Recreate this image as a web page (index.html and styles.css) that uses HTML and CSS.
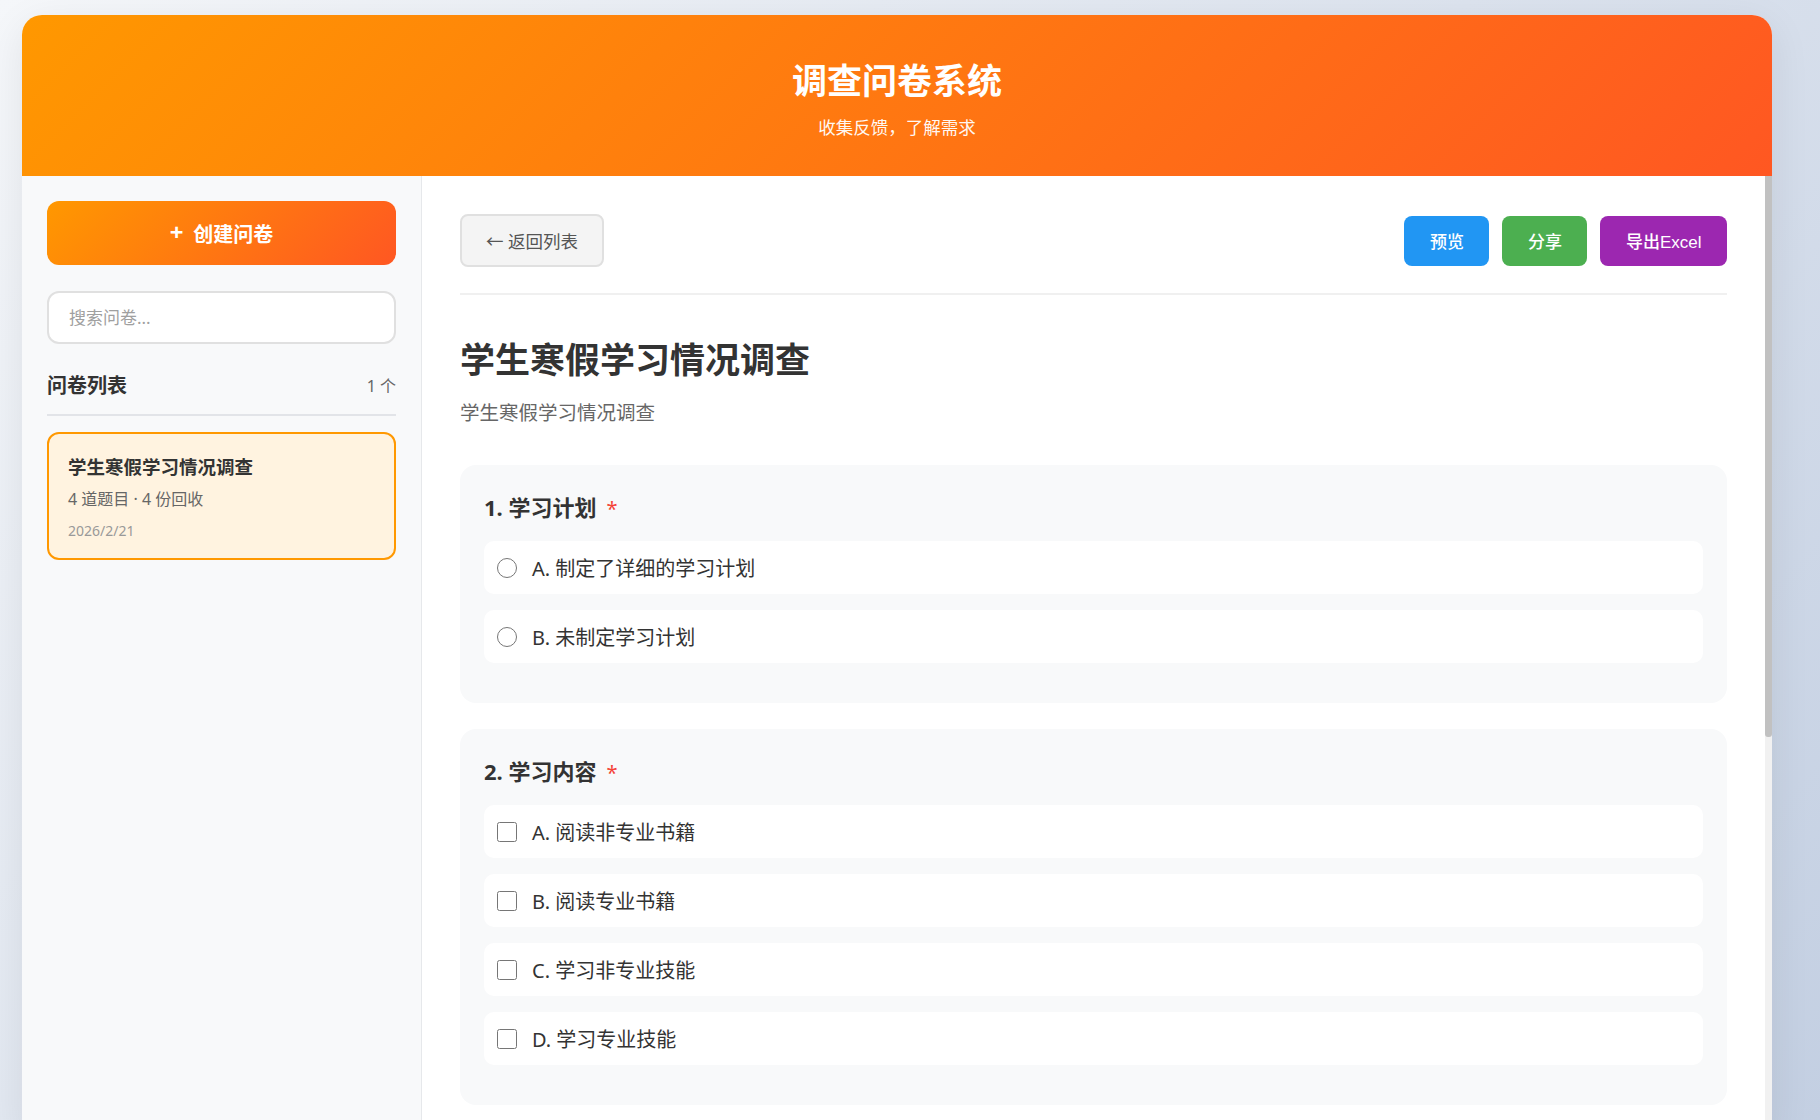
FILE: index.html
```html
<!DOCTYPE html>
<html lang="zh-CN">
<head>
<meta charset="UTF-8">
<title>调查问卷系统</title>
<link rel="stylesheet" href="styles.css">
</head>
<body>
<div class="app">
  <header class="app-header">
    <h1 class="app-title">调查问卷系统</h1>
    <p class="app-subtitle">收集反馈，了解需求</p>
  </header>
  <div class="app-body">
    <aside class="sidebar">
      <button class="create-btn"><span class="plus">+</span>创建问卷</button>
      <input class="search" type="text" placeholder="搜索问卷...">
      <div class="list-head">
        <span class="list-title">问卷列表</span>
        <span class="list-count">1 个</span>
      </div>
      <div class="survey-card">
        <div class="survey-name">学生寒假学习情况调查</div>
        <div class="survey-meta">4 道题目 · 4 份回收</div>
        <div class="survey-date">2026/2/21</div>
      </div>
    </aside>
    <main class="main">
      <div class="toolbar">
        <button class="back-btn">← 返回列表</button>
        <div class="actions">
          <button class="act act-blue">预览</button>
          <button class="act act-green">分享</button>
          <button class="act act-purple">导出Excel</button>
        </div>
      </div>
      <h2 class="survey-title">学生寒假学习情况调查</h2>
      <p class="survey-desc">学生寒假学习情况调查</p>

      <section class="question">
        <div class="q-title">1. 学习计划<span class="req">*</span></div>
        <label class="option"><input type="radio" name="q1"><span>A. 制定了详细的学习计划</span></label>
        <label class="option"><input type="radio" name="q1"><span>B. 未制定学习计划</span></label>
      </section>

      <section class="question">
        <div class="q-title">2. 学习内容<span class="req">*</span></div>
        <label class="option"><input type="checkbox"><span>A. 阅读非专业书籍</span></label>
        <label class="option"><input type="checkbox"><span>B. 阅读专业书籍</span></label>
        <label class="option"><input type="checkbox"><span>C. 学习非专业技能</span></label>
        <label class="option"><input type="checkbox"><span>D. 学习专业技能</span></label>
      </section>
    </main>
    <div class="scroll-track"><div class="scroll-thumb"></div></div>
  </div>
</div>
</body>
</html>
```
FILE: styles.css
```css
* { box-sizing: border-box; }

html, body {
  margin: 0;
  padding: 0;
  height: 100%;
  overflow: hidden;
}

body {
  font-family: "Noto Sans", "Noto Sans CJK SC", sans-serif;
  color: #333;
  background: linear-gradient(135deg, #f5f7fa 0%, #c3cfe2 100%);
}

.app {
  margin: 15px 0 0 22px;
  width: 1750px;
  height: 1125px;
  background: #fff;
  border-radius: 20px;
  overflow: hidden;
  box-shadow: 0 10px 40px rgba(0, 0, 0, 0.08);
  display: flex;
  flex-direction: column;
}

.app-header {
  height: 161px;
  flex: none;
  background: linear-gradient(135deg, #ff9800 0%, #ff5722 100%);
  color: #fff;
  text-align: center;
  padding: 44px 20px 0;
}

.app-title {
  margin: 0;
  font-size: 35px;
  line-height: 44px;
  font-weight: 700;
}

.app-subtitle {
  margin: 12px 0 0;
  font-size: 17.5px;
  line-height: 24px;
  opacity: 0.95;
}

.app-body {
  flex: 1;
  display: flex;
  min-height: 0;
}

/* sidebar */
.sidebar {
  width: 400px;
  flex: none;
  background: #f8f9fa;
  border-right: 1px solid #e6e8eb;
  padding: 25px;
}

.create-btn {
  display: flex;
  align-items: center;
  justify-content: center;
  width: 100%;
  height: 64px;
  border: none;
  border-radius: 12px;
  background: linear-gradient(135deg, #ff9800 0%, #ff5722 100%);
  color: #fff;
  font-family: "Noto Sans", "Noto Sans CJK SC", sans-serif;
  font-size: 20px;
  font-weight: 700;
}

.plus {
  font-size: 24px;
  margin-right: 10px;
  line-height: 1;
  position: relative;
  top: -1px;
}

.search {
  display: block;
  width: 100%;
  height: 53px;
  margin-top: 26px;
  border: 2px solid #e0e0e0;
  border-radius: 12px;
  padding: 0 20px;
  background: #fff;
  font-family: "Noto Sans", "Noto Sans CJK SC", sans-serif;
  font-size: 17px;
  color: #333;
  outline: none;
}

.search::placeholder { color: #a0a0a0; }

.list-head {
  display: flex;
  justify-content: space-between;
  align-items: center;
  margin-top: 26px;
  padding-bottom: 12px;
  border-bottom: 2px solid #e2e4e8;
  line-height: 32px;
}

.list-title {
  font-size: 20px;
  font-weight: 700;
  color: #333;
}

.list-count {
  font-size: 16px;
  color: #666;
}

.survey-card {
  margin-top: 16px;
  background: #fff3e0;
  border: 2px solid #ff9800;
  border-radius: 12px;
  padding: 18px 19px 17px;
}

.survey-name {
  font-size: 18.5px;
  font-weight: 700;
  line-height: 30px;
  color: #333;
  margin-bottom: 5px;
}

.survey-meta {
  font-size: 16px;
  line-height: 24px;
  color: #666;
  margin-bottom: 10px;
}

.survey-date {
  font-size: 14px;
  line-height: 20px;
  color: #999;
}

/* main */
.main {
  flex: 1;
  min-width: 0;
  overflow: hidden;
  padding: 38px;
}

.scroll-track {
  width: 7px;
  flex: none;
  background: #f1f1f1;
}

.scroll-thumb {
  height: 561px;
  background: #c1c1c1;
  border-radius: 0 0 3px 3px;
}

.toolbar {
  display: flex;
  justify-content: space-between;
  align-items: center;
  padding-bottom: 26px;
  border-bottom: 2px solid #f0f0f0;
  margin-bottom: 42px;
}

.back-btn {
  height: 53px;
  padding: 0 24px;
  background: #f4f4f4;
  border: 2px solid #e0e0e0;
  border-radius: 8px;
  color: #555;
  font-family: "Noto Sans", "Noto Sans CJK SC", sans-serif;
  font-size: 17.5px;
}

.actions {
  display: flex;
  gap: 13px;
}

.act {
  height: 50px;
  padding: 0 25.5px;
  border: none;
  border-radius: 8px;
  color: #fff;
  font-family: "Liberation Sans", "Noto Sans CJK SC", sans-serif;
  font-size: 17px;
  font-weight: 500;
}

.act-blue { background: #2196f3; }
.act-green { background: #4caf50; }
.act-purple { background: #9c27b0; }

.survey-title {
  margin: 0 0 17px;
  font-size: 35px;
  line-height: 46px;
  font-weight: 700;
  color: #333;
}

.survey-desc {
  margin: 0 0 39px;
  font-size: 19.5px;
  line-height: 26px;
  color: #666;
}

.question {
  background: #f8f9fa;
  border-radius: 16px;
  padding: 22px 24px 24px;
  margin-bottom: 26px;
}

.q-title {
  font-size: 22px;
  font-weight: 700;
  line-height: 40px;
  color: #333;
  margin-bottom: 12px;
}

.req {
  color: #f44336;
  font-weight: 400;
  font-size: 20px;
  margin-left: 10px;
}

.option {
  display: flex;
  align-items: center;
  gap: 15px;
  height: 53px;
  padding: 0 13px;
  background: #fff;
  border-radius: 10px;
  margin-bottom: 16px;
  font-size: 20px;
  color: #333;
}

.option input {
  width: 20px;
  height: 20px;
  margin: 0;
  flex: none;
}
```
